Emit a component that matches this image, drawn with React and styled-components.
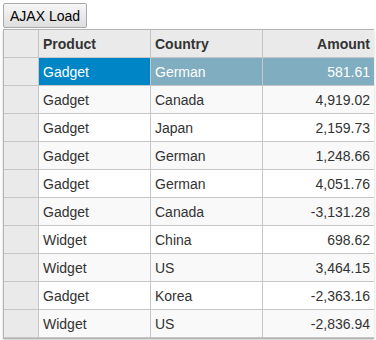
import React from 'react'
import styled, { createGlobalStyle } from 'styled-components'

const rows = [
  ['Gadget', 'German', '581.61'],
  ['Gadget', 'Canada', '4,919.02'],
  ['Gadget', 'Japan', '2,159.73'],
  ['Gadget', 'German', '1,248.66'],
  ['Gadget', 'German', '4,051.76'],
  ['Gadget', 'Canada', '-3,131.28'],
  ['Widget', 'China', '698.62'],
  ['Widget', 'US', '3,464.15'],
  ['Gadget', 'Korea', '-2,363.16'],
  ['Widget', 'US', '-2,836.94'],
]

const Global = createGlobalStyle`
body {
  margin: 0;
  padding: 3px;
  font-family: "Liberation Sans", Arial, sans-serif;
  font-size: 14px;
  color: #333;
}
`

const Button = styled.button`
display: block;
height: 25px;
padding: 0 6px;
font-family: "Liberation Sans", Arial, sans-serif;
font-size: 14px;
color: #000;
background: linear-gradient(#f6f6f6, #dedede);
border: 1px solid #a9a9a9;
border-radius: 2px;
margin-bottom: 1px;
`

const Grid = styled.div`
display: grid;
grid-template-columns: 35px 112px 112px 111px;
width: 371px;
border: 1px solid #b4b4b4;
box-sizing: border-box;
box-shadow: 0 2px 3px rgba(0, 0, 0, 0.18);
`

const Cell = styled.div`
height: 28px;
box-sizing: border-box;
padding: 0 4px;
display: flex;
align-items: center;
justify-content: ${p => (p.$right ? 'flex-end' : 'flex-start')};
border-right: 1px solid #c6c6c6;
border-bottom: 1px solid #c6c6c6;
background: ${p => p.$bg || '#fff'};
color: ${p => p.$fg || '#333'};
font-weight: ${p => (p.$bold ? 'bold' : 'normal')};
white-space: nowrap;
&:nth-child(4n) {
  border-right: none;
}
`

const Header = styled(Cell)`
background: #eaeaea;
color: #333;
font-weight: bold;
`

const RowHead = styled(Cell)`
background: #eaeaea;
`

export default function App() {
  return (
    <>
      <Global />
      <Button>AJAX Load</Button>
      <Grid>
        <Header />
        <Header>Product</Header>
        <Header>Country</Header>
        <Header $right>Amount</Header>
        {rows.map((r, i) => {
          const sel = i === 0
          const bg = sel ? '#80adbf' : i % 2 ? '#f9f9f9' : '#fff'
          const fg = sel ? '#fff' : '#333'
          return (
            <React.Fragment key={i}>
              <RowHead />
              <Cell $bg={sel ? '#0085c7' : bg} $fg={fg}>{r[0]}</Cell>
              <Cell $bg={bg} $fg={fg}>{r[1]}</Cell>
              <Cell $bg={bg} $fg={fg} $right>{r[2]}</Cell>
            </React.Fragment>
          )
        })}
      </Grid>
    </>
  )
}
